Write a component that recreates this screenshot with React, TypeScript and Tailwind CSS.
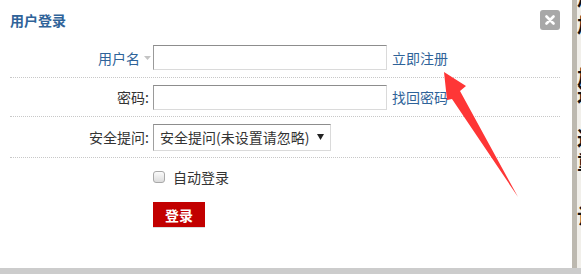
import React from "react";

const Row = ({ children, h }: { children: React.ReactNode; h: string }) => (
  <div className={`flex items-center border-b border-dotted border-[#c8c8c8] ${h}`}>{children}</div>
);

export default function App() {
  return (
    <div className="relative w-[581px] h-[274px] overflow-hidden bg-[#cccccc] font-['Microsoft_YaHei','Noto_Sans_CJK_SC',sans-serif] text-[14px]">
      <div className="flex h-[268px]">
        <div className="w-[572px] bg-white flex flex-col">
          <div className="flex items-center justify-between pl-[10px] pr-[12px] pt-[10px] pb-[9px]">
            <span className="font-bold text-[14px] leading-[20px] text-[#2f6399]">用户登录</span>
            <div className="w-[20px] h-[20px] rounded-[3px] bg-[#a8a8a8] flex items-center justify-center">
              <svg width="10" height="10" viewBox="0 0 10 10">
                <path d="M1.5 1.5 L8.5 8.5 M8.5 1.5 L1.5 8.5" stroke="white" strokeWidth="2.6" strokeLinecap="round" />
              </svg>
            </div>
          </div>
          <div className="ml-[10px] mr-[12px] flex flex-col">
            <Row h="h-[39px] pb-[1px]">
              <div className="w-[143px] flex items-center justify-end pr-[2px]">
                <span className="text-[#2f6399] leading-none">用户名</span>
                <svg className="ml-[4px] mt-[1px]" width="7" height="4" viewBox="0 0 7 4">
                  <path d="M0 0 L7 0 L3.5 4 Z" fill="#c4c4c4" />
                </svg>
              </div>
              <div className="w-[234px] h-[25px] border border-t-[#8d8d8d] border-l-[#9a9a9a] border-r-[#dadada] border-b-[#dadada] bg-white" />
              <span className="ml-[5px] text-[#2f6399] leading-none">立即注册</span>
            </Row>
            <Row h="h-[39px]">
              <div className="w-[143px] text-right pr-[4px] text-[#333] leading-none">密码:</div>
              <div className="w-[234px] h-[25px] border border-t-[#8d8d8d] border-l-[#9a9a9a] border-r-[#dadada] border-b-[#dadada] bg-white" />
              <span className="ml-[5px] text-[#2f6399] leading-none">找回密码</span>
            </Row>
            <Row h="h-[41px]">
              <div className="w-[143px] text-right pr-[4px] text-[#333] leading-none">安全提问:</div>
              <div className="w-[178px] h-[27px] border border-t-[#8d8d8d] border-l-[#a0a0a0] border-r-[#dadada] border-b-[#dadada] bg-white flex items-center pl-[6px] pr-[6px] justify-between">
                <span className="text-[#333] leading-none">安全提问(未设置请忽略)</span>
                <svg width="7" height="6" viewBox="0 0 7 6">
                  <path d="M0 0 L7 0 L3.5 6 Z" fill="#222" />
                </svg>
              </div>
            </Row>
          </div>
          <div className="pl-[153px] flex flex-col">
            <div className="mt-[9px] h-[20px] flex items-center">
              <div className="w-[12px] h-[12px] rounded-[3px] border border-[#a9a9a9] bg-gradient-to-b from-[#fbfbfb] to-[#dcdcdc]" />
              <span className="ml-[8px] text-[#333] leading-none">自动登录</span>
            </div>
            <div className="mt-[15px] w-[52px] h-[25px] bg-[#c20000] flex items-center justify-center shadow-[0_1px_0_#dddddd]">
              <span className="text-white font-bold leading-none">登录</span>
            </div>
          </div>
        </div>
        <div className="w-[5px] bg-[#bdb9b0]" />
        <div className="flex-1 bg-[#f1efea] overflow-hidden flex flex-col text-[20px] font-bold leading-[20px] text-[#111]">
          <span className="mt-[-12px]">加</span>
          <span className="mt-[7px]">加</span>
          <span className="mt-[32px]">加</span>
          <span className="mt-[-3px]">这</span>
          <span className="mt-[24px]">这</span>
          <span className="mt-[4px]">重</span>
          <span className="mt-[34px]">让</span>
        </div>
      </div>
      <svg className="absolute inset-0 pointer-events-none" width="581" height="274" viewBox="0 0 581 274">
        <polygon points="444,72 466,86 460,91 518,197 452,99 447,100" fill="#fe3636" />
      </svg>
    </div>
  );
}
